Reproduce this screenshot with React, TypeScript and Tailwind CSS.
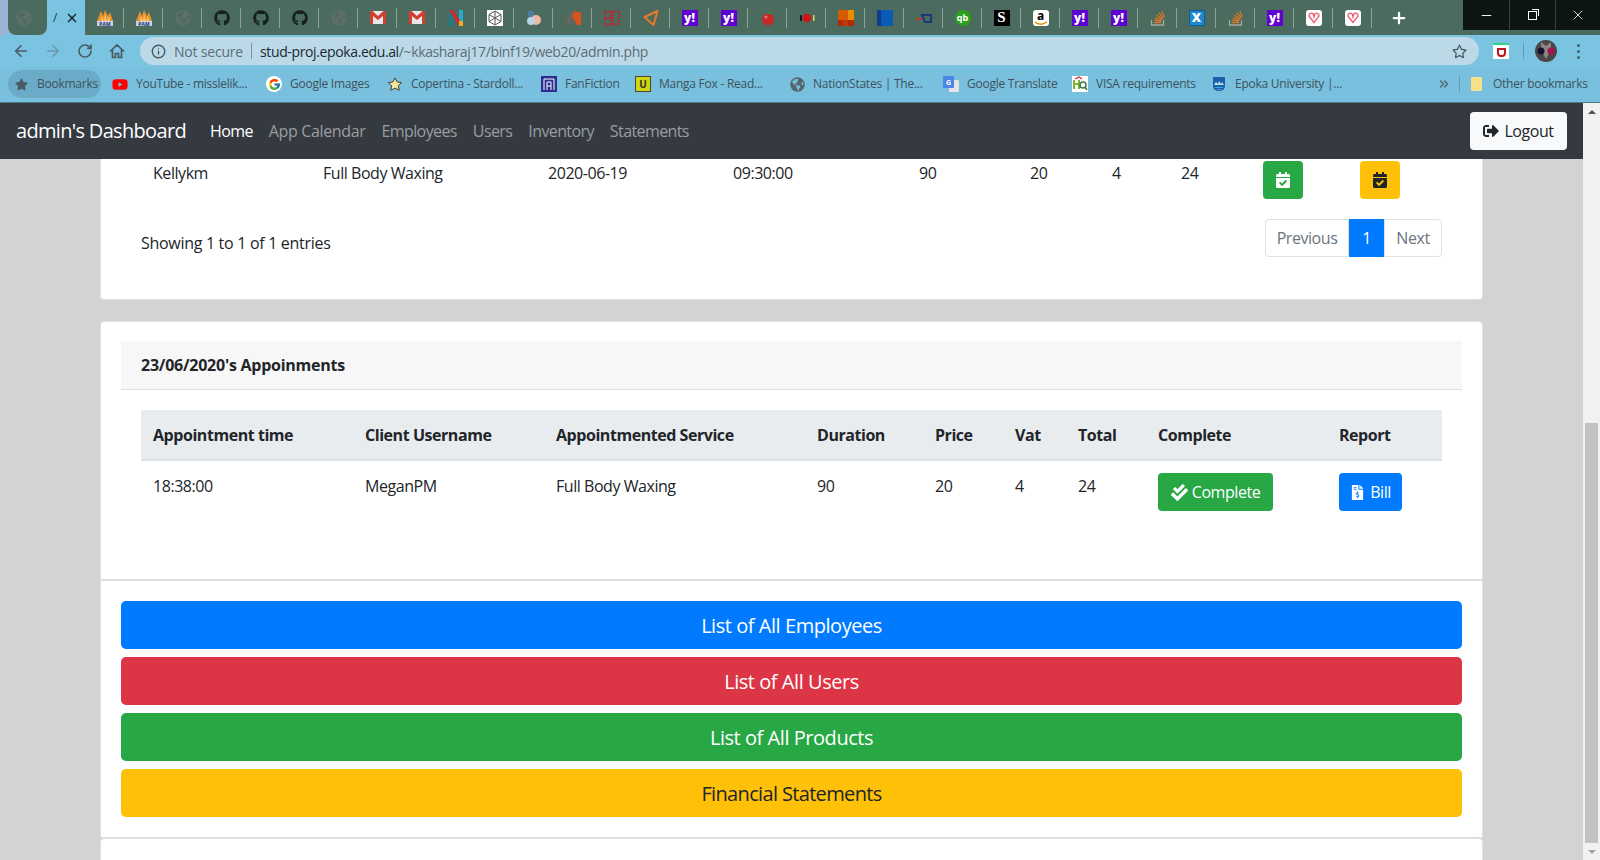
import { FaCalendarCheck, FaCheckDouble, FaFileInvoiceDollar, FaGithub, FaGlobeAmericas, FaSignOutAlt, FaStar, FaRegStar, FaYoutube } from "react-icons/fa";
import { FcGoogle } from "react-icons/fc";
import { ArrowLeft, ArrowRight, ChevronsRight, Info, Minus, Plus, RotateCw, X } from "lucide-react";

const fontClass = "font-['Open_Sans','Noto_Sans',sans-serif]";

const GlobeIcon = () => <FaGlobeAmericas size={16} className="text-[#5f6f68]" />;

const Pam = () => (
  <svg width="18" height="18" viewBox="0 0 18 18">
    <polygon points="1,12 5,2 7,7 9,1 12,7 14,3 17,12" fill="#e8912d" />
    <polygon points="5,12 6,7 8,12 9,5 11,12 13,7 14,12" fill="#f7c46a" />
    <rect x="1" y="12" width="16" height="5" fill="#c9d2e6" />
    <text x="9" y="16.5" fontSize="5" fontWeight="700" textAnchor="middle" fill="#24306b">PAM</text>
  </svg>
);

const Github = () => <FaGithub size={16} className="text-[#15211c]" />;

const Gmail = () => (
  <svg width="16" height="13" viewBox="0 0 16 13">
    <rect width="16" height="13" fill="#e8e8e8" />
    <path d="M0 0h2.500L8 5l5.500-5H16v13h-3V5L8 9 3 5v8H0z" fill="#d23f31" />
  </svg>
);

const NLogo = () => (
  <svg width="16" height="16" viewBox="0 0 16 16">
    <rect x="1" width="4" height="16" fill="#1c7f86" />
    <rect x="11" width="4" height="11" fill="#2aa7c9" />
    <polygon points="1,0 5,0 15,16 11,16" fill="#d8262c" />
    <rect x="11" y="11" width="4" height="5" fill="#f2b01e" />
  </svg>
);

const CubeLogo = () => (
  <svg width="16" height="16" viewBox="0 0 16 16">
    <rect width="16" height="16" fill="#fff" />
    <path d="M8 1l6 3.500v7L8 15l-6-3.500v-7zM8 1v14M2 4.500l12 7M14 4.500l-12 7" fill="none" stroke="#555" strokeWidth="1" />
  </svg>
);

const Blob = () => (
  <svg width="16" height="16" viewBox="0 0 16 16">
    <circle cx="5" cy="4" r="3.500" fill="#4d7f9c" />
    <circle cx="10" cy="10" r="5" fill="#f0b8a6" />
    <circle cx="5" cy="11" r="4" fill="#b7d3e4" />
  </svg>
);

const OrangeA = () => (
  <svg width="16" height="16" viewBox="0 0 16 16">
    <polygon points="6,1 16,2 16,15 10,15 7,8" fill="#d8541a" />
    <polygon points="0,15 6,1 8,1 9,3 4,15" fill="#70625c" />
    <polygon points="7,8 9,8 12,15 10,15" fill="#70625c" />
  </svg>
);

const RedBo = () => (
  <svg width="16" height="16" viewBox="0 0 16 16">
    <rect x="0.500" y="1.500" width="7" height="13" fill="none" stroke="#d3192b" strokeWidth="1.500" strokeDasharray="2 1" />
    <rect x="8.500" y="1.500" width="7" height="13" rx="2" fill="none" stroke="#d3192b" strokeWidth="1.500" strokeDasharray="2 1" />
    <path d="M1 8h6" stroke="#d3192b" strokeWidth="1.500" />
  </svg>
);

const Triangle = () => (
  <svg width="16" height="16" viewBox="0 0 16 16">
    <path d="M14.500 1L1.500 7l9 8z" fill="none" stroke="#e87a2c" strokeWidth="2" strokeLinejoin="round" />
  </svg>
);

const Yahoo = () => (
  <div className="flex h-4 w-4 items-center justify-center bg-[#5f01d1] text-[12px] font-extrabold leading-none text-white">y!</div>
);

const Apple = () => (
  <svg width="14" height="16" viewBox="0 0 14 16">
    <circle cx="7" cy="9.500" r="6" fill="#c62828" />
    <path d="M7 4c0-2 1-3 3-3 0 2-1 3-3 3z" fill="#3e8e41" />
    <circle cx="5" cy="7" r="1.500" fill="#e57373" />
  </svg>
);

const RedDot = () => (
  <svg width="16" height="16" viewBox="0 0 16 16">
    <circle cx="8" cy="8" r="4" fill="#d8101a" />
    <rect x="1" y="5" width="2" height="6" rx="1" fill="#141414" />
    <rect x="14" y="5" width="1.500" height="6" fill="#e4d44c" />
  </svg>
);

const Squares = () => (
  <div className="grid h-4 w-4 grid-cols-3 grid-rows-3">
    <div className="col-span-2 bg-[#d65a00]" />
    <div className="bg-[#e88c00]" />
    <div className="col-span-2 bg-[#d65a00]" />
    <div className="bg-[#e88c00]" />
    <div className="bg-[#b02a06]" />
    <div className="bg-[#c03a08]" />
    <div className="bg-[#b02a06]" />
  </div>
);

const BlueSquare = () => (
  <div className="flex h-4 w-4">
    <div className="w-1 bg-[#0c3c8c]" />
    <div className="flex-1 bg-[#0a5ab8]" />
  </div>
);

const SmallFlag = () => (
  <svg width="16" height="16" viewBox="0 0 16 16">
    <path d="M0 9h6" stroke="#d8262c" strokeWidth="1.500" />
    <path d="M6 5h9v7H9z" fill="none" stroke="#173a7a" strokeWidth="2" />
  </svg>
);

const Qb = () => (
  <div className="flex h-4 w-4 items-center justify-center rounded-full bg-[#2ca01c] text-[9px] font-bold leading-none text-white">qb</div>
);

const BlackS = () => (
  <div className="flex h-4 w-4 items-center justify-center bg-black font-['Liberation_Serif',serif] text-[15px] font-bold leading-none text-white">S</div>
);

const Amazon = () => (
  <div className="relative flex h-4 w-4 justify-center rounded-[3px] bg-white text-[12px] font-bold leading-[11px] text-black">
    a
    <svg width="14" height="5" viewBox="0 0 14 5" className="absolute bottom-0 left-[1px]">
      <path d="M1 1c3 3 8 3 12 0" fill="none" stroke="#f08c00" strokeWidth="1.500" />
    </svg>
  </div>
);

const Stack = () => (
  <svg width="16" height="16" viewBox="0 0 16 16">
    <path d="M1.500 10v5h12v-5" fill="none" stroke="#a8a8a0" strokeWidth="1.300" />
    <path d="M4 12.500h7M4.200 10.200l7 1M5 7.700l6.500 2.500M6.500 5.200l5.800 3.700M8.800 3l4.500 5M11.800 1.200l2.400 5.800" fill="none" stroke="#d9782a" strokeWidth="1.300" />
  </svg>
);

const Xwing = () => (
  <div className="flex h-4 w-4 items-center justify-center border border-[#0f5c9a] bg-[#1e88d0] text-[13px] font-extrabold leading-none text-white">X</div>
);

const Vivaldi = () => (
  <div className="flex h-4 w-4 items-center justify-center rounded-[3px] bg-white">
    <svg width="12" height="12" viewBox="0 0 12 12">
      <path d="M6 10.500L1.200 4.500a2.400 2.400 0 0 1 4-2.500L6 5 6.800 2a2.400 2.400 0 0 1 4 2.500z" fill="none" stroke="#ef5a6f" strokeWidth="1.300" />
    </svg>
  </div>
);

const tabIcons = [
  Pam, Pam, GlobeIcon, Github, Github, Github, GlobeIcon, Gmail, Gmail, NLogo, CubeLogo, Blob, OrangeA, RedBo, Triangle,
  Yahoo, Yahoo, Apple, RedDot, Squares, BlueSquare, SmallFlag, Qb, BlackS, Amazon, Yahoo, Yahoo, Stack, Xwing, Stack, Yahoo, Vivaldi, Vivaldi,
];

const bookmarks = [
  { label: "YouTube - misslelik...", icon: <FaYoutube size={17} className="text-[#f00]" />, box: "w-[154px]" },
  { label: "Google Images", icon: <div className="flex h-4 w-4 items-center justify-center rounded-full bg-white"><FcGoogle size={13} /></div>, box: "w-[121px]" },
  {
    label: "Copertina - Stardoll...",
    icon: (
      <svg width="17" height="17" viewBox="0 0 17 17">
        <path d="M8.500 1.500l2.200 4.300 4.800.7-3.500 3.300.9 4.800-4.400-2.300-4.400 2.300.9-4.800L1.500 6.500l4.800-.7z" fill="#f7e7a0" stroke="#3f3a2a" strokeWidth="1" strokeLinejoin="round" />
      </svg>
    ),
    box: "w-[154px]",
  },
  {
    label: "FanFiction",
    icon: (
      <svg width="16" height="16" viewBox="0 0 16 16">
        <rect width="16" height="16" fill="#2c2f8f" />
        <path d="M3 3h10M3 3v11M13 3v11M6 6v8M10 6v8M6 6h4M6 10h4" fill="none" stroke="#fff" strokeWidth="1" />
      </svg>
    ),
    box: "w-[94px]",
  },
  {
    label: "Manga Fox - Read...",
    icon: (
      <div className="flex h-4 w-4 items-center justify-center border border-[#444] bg-[#cfd60c] text-[10px] font-bold leading-none text-[#333]">U</div>
    ),
    box: "w-[154px]",
  },
  { label: "NationStates | The...", icon: <FaGlobeAmericas size={15} className="text-[#55666e]" />, box: "w-[154px]" },
  {
    label: "Google Translate",
    icon: (
      <div className="relative h-4 w-4">
        <div className="absolute right-0 top-[4px] h-3 w-[10px] rounded-[1px] bg-[#e4e4e4]" />
        <div className="absolute left-0 top-0 flex h-3 w-[11px] items-center justify-center rounded-[1px] bg-[#4a86e8] text-[7px] font-bold leading-none text-white">G</div>
      </div>
    ),
    box: "w-[129px]",
  },
  {
    label: "VISA requirements",
    icon: (
      <svg width="16" height="16" viewBox="0 0 16 16">
        <rect width="16" height="16" fill="#fff" />
        <path d="M2 4v9M7 4v9M2 8h5" stroke="#7ab52c" strokeWidth="2" />
        <circle cx="11" cy="9" r="3" fill="none" stroke="#3a7a4a" strokeWidth="1.500" />
        <path d="M13 11l2 3" stroke="#3a7a4a" strokeWidth="1.500" />
        <path d="M3 3l4-2 3 2" fill="none" stroke="#d8262c" strokeWidth="1.200" />
      </svg>
    ),
    box: "w-[139px]",
  },
  {
    label: "Epoka University |...",
    icon: (
      <svg width="16" height="16" viewBox="0 0 16 16">
        <path d="M2 1h12v9c0 3-3 5-6 5s-6-2-6-5z" fill="#1c5ea8" />
        <path d="M3 9l2-3 2 2 1-3 2 3 1-2 2 3z" fill="#bfe0f5" />
        <path d="M4 11.500h8M6 13.500h4" stroke="#35a8e8" strokeWidth="1.200" />
      </svg>
    ),
    box: "w-[226px]",
  },
];

const scheduled = ["Kellykm", "Full Body Waxing", "2020-06-19", "09:30:00", "90", "20", "4", "24"];
const scheduledCols = ["w-[170px]", "w-[225px]", "w-[185px]", "w-[186px]", "w-[111px]", "w-[82px]", "w-[69px]", "w-[82px]", "w-[97px]", "w-[94px]"];

const headers = [
  { label: "Appointment time", col: "w-[212px]" },
  { label: "Client Username", col: "w-[191px]" },
  { label: "Appointmented Service", col: "w-[261px]" },
  { label: "Duration", col: "w-[118px]" },
  { label: "Price", col: "w-[80px]" },
  { label: "Vat", col: "w-[63px]" },
  { label: "Total", col: "w-[80px]" },
  { label: "Complete", col: "w-[181px]" },
  { label: "Report", col: "w-[115px]" },
];
const appointment = ["18:38:00", "MeganPM", "Full Body Waxing", "90", "20", "4", "24"];

const links = ["List of All Employees", "List of All Users", "List of All Products", "Financial Statements"];
const linkColors = [
  "bg-[#007bff] text-white tracking-[-0.450px]",
  "bg-[#dc3545] text-white tracking-[-0.450px]",
  "bg-[#28a745] text-white tracking-[-0.450px]",
  "bg-[#ffc107] text-[#212529] tracking-[-0.650px]",
];

function BrowserChrome() {
  return (
    <div className="shrink-0">
      {/* Tabs */}
      <div className="flex h-[35px] bg-[#4a6b5d]">
        <div className="flex bg-[#7ac4e2]">
          <div className="h-full w-2 bg-[#9bb4d6]" />
          <div className="flex w-[39px] items-center justify-center rounded-b-lg bg-[#4a6b5d] pr-2">
            <GlobeIcon />
          </div>
          <div className="flex w-[38px] items-center justify-center gap-2 text-xs text-[#20343f]">
            <span className="w-1 overflow-hidden">/</span>
            <X size={14} strokeWidth={2.500} className="text-[#15232a]" />
          </div>
        </div>
        {tabIcons.map((Icon, i) => (
          <div key={i} className="relative flex h-full w-[39px] items-center justify-center">
            <Icon />
            <div className="absolute right-0 top-[8px] h-[20px] w-px bg-[#8aa398]" />
          </div>
        ))}
        <div className="ml-[7px] flex w-[39px] items-center justify-center">
          <Plus size={18} strokeWidth={3} className="text-white" />
        </div>
        <div className="flex-1" />
        <div className="flex h-[30px] w-[137px] text-white">
          <div className="flex w-[46px] items-center justify-center bg-[#0d1513]"><Minus size={15} strokeWidth={1.500} /></div>
          <div className="flex w-[46px] items-center justify-center border-l border-[#39423f] bg-[#0d1513]">
            <div className="relative h-[9px] w-[9px] border border-white">
              <div className="absolute -right-[3px] -top-[3px] h-[7px] w-[7px] border-r border-t border-white" />
            </div>
          </div>
          <div className="flex w-[45px] items-center justify-center border-l border-[#39423f] bg-[#0d1513]"><X size={16} strokeWidth={1.200} /></div>
        </div>
      </div>
      {/* Address bar */}
      <div className="flex h-[32px] items-center bg-[#7ac4e2] pb-[4px] pt-[4px]">
        <div className="flex w-[140px] items-center pl-[5px] text-[#4a5a62]">
          <div className="flex w-[32px] justify-center"><ArrowLeft size={18} strokeWidth={2.200} /></div>
          <div className="flex w-[32px] justify-center"><ArrowRight size={18} strokeWidth={2.200} className="text-[#6d98ab]" /></div>
          <div className="flex w-[32px] justify-center"><RotateCw size={16} strokeWidth={2.500} /></div>
          <div className="flex w-[32px] justify-center">
            <svg width="18" height="18" viewBox="0 0 18 18">
              <path d="M2 9.500L9 3l7 6.500M4.500 8v7.500h3v-4h3v4h3V8" fill="none" stroke="currentColor" strokeWidth="1.700" />
            </svg>
          </div>
        </div>
        <div className="flex h-[28px] w-[1339px] items-center rounded-full bg-[#bcd9e8] pl-[11px] pr-[12px] text-[14px] tracking-[-0.200px]">
          <Info size={15} strokeWidth={2.200} className="text-[#4a5a62]" />
          <span className="ml-[8px] text-[#5b6d77]">Not secure</span>
          <div className="mx-[8px] h-[16px] w-px bg-[#7d94a0]" />
          <span className="tracking-[-0.370px] text-[#1b2a33]">stud-proj.epoka.edu.al</span>
          <span className="tracking-[-0.370px] text-[#5b6d77]">/~kkasharaj17/binf19/web20/admin.php</span>
          <FaRegStar size={15} className="ml-auto text-[#4a5a62]" />
        </div>
        <div className="ml-[14px] flex h-[16px] w-[16px] items-center justify-center border-t-2 border-[#2bd67b] bg-white">
          <div className="h-[9px] w-[9px] rounded-b-sm border-2 border-[#c01818]" />
        </div>
        <div className="ml-[14px] h-[16px] w-px bg-[#5f9bb5]" />
        <svg width="22" height="22" viewBox="0 0 22 22" className="ml-[11px]">
          <circle cx="11" cy="11" r="11" fill="#4a4648" />
          <path d="M6 2l5 4 5-4v8l-5 9-5-9z" fill="#8a8486" />
          <circle cx="6" cy="11" r="3.500" fill="#14122e" />
          <circle cx="16" cy="11" r="3.500" fill="#a8124a" />
        </svg>
        <div className="ml-[20px] flex flex-col gap-[3px]">
          <div className="h-[3px] w-[3px] rounded-full bg-[#4a5a62]" />
          <div className="h-[3px] w-[3px] rounded-full bg-[#4a5a62]" />
          <div className="h-[3px] w-[3px] rounded-full bg-[#4a5a62]" />
        </div>
      </div>
      {/* Bookmarks bar */}
      <div className="flex h-[36px] items-center border-b border-[#4f7687] bg-[#78c0de] pb-[1px] pl-[8px] text-[12px] tracking-[-0.250px] text-[#3f525c]">
        <div className="flex h-[28px] w-[93px] items-center gap-[9px] rounded-full bg-[#6aacc7] pl-[7px]">
          <FaStar size={13} className="text-[#4a5a62]" />
          <span>Bookmarks</span>
        </div>
        <div className="w-[11px]" />
        {bookmarks.map((b) => (
          <div key={b.label} className={`flex items-center gap-[8px] ${b.box}`}>
            <div className="flex w-4 justify-center">{b.icon}</div>
            <span>{b.label}</span>
          </div>
        ))}
        <ChevronsRight size={14} strokeWidth={2.500} className="text-[#55666e]" />
        <div className="ml-[8px] h-[16px] w-px bg-[#5f9bb5]" />
        <div className="ml-[11px] h-[14px] w-[11px] rounded-[1px] bg-[#f6e08a]" />
        <span className="ml-[11px]">Other bookmarks</span>
      </div>
    </div>
  );
}

function Scrollbar() {
  return (
    <div className="flex w-[17px] shrink-0 flex-col bg-[#f1f1f1]">
      <div className="flex h-[17px] items-center justify-center">
        <div className="h-0 w-0 border-x-[4px] border-b-[4px] border-x-transparent border-b-[#505050]" />
      </div>
      <div className="flex-1 px-[2px] pt-[303px]">
        <div className="h-full bg-[#c1c1c1]" />
      </div>
      <div className="flex h-[17px] items-center justify-center">
        <div className="h-0 w-0 border-x-[4px] border-t-[4px] border-x-transparent border-t-[#a3a3a3]" />
      </div>
    </div>
  );
}

export default function App() {
  return (
    <div className={`flex h-screen flex-col overflow-hidden bg-[#d3d3d3] ${fontClass}`}>
      <BrowserChrome />
      <div className="flex min-h-0 flex-1">
        <div className="flex min-w-0 flex-1 flex-col overflow-hidden">
          {/* Navbar */}
          <nav className="flex h-[56px] shrink-0 items-center bg-[#343a40] px-[16px]">
            <span className="mr-[24px] text-[20px] tracking-[-0.680px] text-white">admin's Dashboard</span>
            <div className="flex gap-[16px] text-[16px] tracking-[-0.600px] text-[#9a9da0]">
              <a className="text-white">Home</a>
              <a className="tracking-[-0.350px]">App Calendar</a>
              <a>Employees</a>
              <a>Users</a>
              <a>Inventory</a>
              <a>Statements</a>
            </div>
            <button className="ml-auto flex h-[38px] w-[97px] items-center justify-center gap-[5px] rounded-[4px] bg-[#f8f9fa] text-[16px] tracking-[-0.450px] text-[#212529]">
              <FaSignOutAlt size={16} />
              Logout
            </button>
          </nav>
          <div className="flex flex-1 flex-col px-[100px] text-[16px] tracking-[-0.450px] text-[#212529]">
            {/* Scheduled table (scrolled) */}
            <section className="h-[141px] shrink-0 rounded-b-[4px] border border-t-0 border-[#dfdfdf] bg-white px-[40px]">
              <table className="w-[1301px] table-fixed border-collapse">
                <colgroup>
                  {scheduledCols.map((c, i) => <col key={i} className={c} />)}
                </colgroup>
                <tbody>
                  <tr>
                    {scheduled.map((v, i) => (
                      <td key={i} className="px-[12px] pb-[10px] pt-[2px] align-top">{v}</td>
                    ))}
                    <td className="px-[12px] pt-[2px] align-top">
                      <button className="flex h-[38px] w-[40px] items-center justify-center rounded-[4px] bg-[#28a745] text-white"><FaCalendarCheck size={16} /></button>
                    </td>
                    <td className="px-[12px] pt-[2px] align-top">
                      <button className="flex h-[38px] w-[40px] items-center justify-center rounded-[4px] bg-[#ffc107] text-[#212529]"><FaCalendarCheck size={16} /></button>
                    </td>
                  </tr>
                </tbody>
              </table>
              <div className="mt-[20px] flex items-center justify-between">
                <div className="pt-[10px] tracking-[-0.300px]">Showing 1 to 1 of 1 entries</div>
                <div className="flex h-[38px] text-[#6c757d]">
                  <div className="flex w-[84px] items-center justify-center rounded-l-[4px] border border-[#dee2e6] bg-white">Previous</div>
                  <div className="flex w-[35px] items-center justify-center bg-[#007bff] text-white">1</div>
                  <div className="flex w-[58px] items-center justify-center rounded-r-[4px] border border-[#dee2e6] bg-white">Next</div>
                </div>
              </div>
            </section>

            {/* Today's appointments */}
            <section className="mt-[21px] h-[259px] shrink-0 rounded-t-[4px] border border-[#dfdfdf] bg-white px-[20px] pt-[19px]">
              <div className="flex h-[49px] items-center border-b border-[#dfdfdf] bg-[#f7f7f7] px-[20px] font-bold tracking-[-0.250px]">23/06/2020's Appoinments</div>
              <div className="px-[20px] pt-[20px]">
                <table className="w-[1301px] table-fixed border-collapse">
                  <colgroup>
                    {headers.map((h) => <col key={h.label} className={h.col} />)}
                  </colgroup>
                  <thead>
                    <tr className="h-[50px] border-b-2 border-[#dee2e6] bg-[#e9ecef] text-left">
                      {headers.map((h) => (
                        <th key={h.label} className="px-[12px] font-bold">{h.label}</th>
                      ))}
                    </tr>
                  </thead>
                  <tbody>
                    <tr>
                      {appointment.map((v, i) => (
                        <td key={i} className="px-[12px] pb-[12px] pt-[13px] align-top">{v}</td>
                      ))}
                      <td className="px-[12px] pb-[12px] pt-[12px] align-top">
                        <button className="flex h-[38px] w-[115px] items-center justify-center gap-[4px] rounded-[4px] bg-[#28a745] text-white"><FaCheckDouble size={17} />Complete</button>
                      </td>
                      <td className="px-[12px] pb-[12px] pt-[12px] align-top">
                        <button className="flex h-[38px] w-[63px] items-center justify-center gap-[5px] rounded-[4px] bg-[#007bff] text-white"><FaFileInvoiceDollar size={15} />Bill</button>
                      </td>
                    </tr>
                  </tbody>
                </table>
              </div>
            </section>

            {/* Shortcuts */}
            <section className="flex h-[258px] shrink-0 flex-col gap-[8px] border border-[#dfdfdf] bg-white px-[20px] pt-[20px]">
              {links.map((label, i) => (
                <button key={label} className={`h-[48px] rounded-[5px] pt-[2px] text-[20px] ${linkColors[i]}`}>{label}</button>
              ))}
            </section>
            <section className="h-[30px] shrink-0 rounded-t-[4px] border border-[#dfdfdf] bg-white" />
          </div>
        </div>
        <Scrollbar />
      </div>
    </div>
  );
}
